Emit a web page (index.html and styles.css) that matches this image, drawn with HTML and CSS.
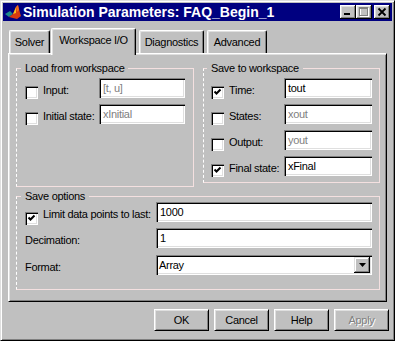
FILE: index.html
```html
<!DOCTYPE html>
<html lang="en">
<head>
  <meta charset="UTF-8">
  <title>Simulation Parameters: FAQ_Begin_1</title>
  <link rel="stylesheet" href="styles.css">
</head>
<body>
  <div class="window">
    <div class="titlebar">
      <svg class="app-icon" width="16" height="16" viewBox="0 0 16 16">
        <polygon points="0,10 5,7 8,10 4,13" fill="#1f8a8a"/>
        <polygon points="4,13 8,10 11,3 13,1 15,9 16,12 12,15 8,14" fill="#d83a10"/>
        <polygon points="8,10 11,3 11,9" fill="#f8c020"/>
        <polygon points="11,3 13,1 14,6 12,8" fill="#f07020"/>
      </svg>
      <span class="title">Simulation Parameters: FAQ_Begin_1</span>
      <div class="caption-btns">
        <span class="cap-btn">
          <svg width="16" height="14" viewBox="0 0 16 14"><rect x="4" y="8" width="6" height="2" fill="#000"/></svg>
        </span>
        <span class="cap-btn">
          <svg width="16" height="14" viewBox="0 0 16 14">
            <rect x="4.5" y="3.5" width="8" height="8" fill="none" stroke="#fff"/>
            <rect x="3.5" y="2.5" width="8" height="8" fill="none" stroke="#808080"/>
            <rect x="3" y="2" width="9" height="2" fill="#808080"/>
          </svg>
        </span>
        <span class="cap-btn close">
          <svg width="16" height="14" viewBox="0 0 16 14"><path d="M4.5 3.5 L11.5 10.5 M11.5 3.5 L4.5 10.5" stroke="#000" stroke-width="1.8"/></svg>
        </span>
      </div>
    </div>

    <div class="client">
      <div class="tabs">
        <div class="tab tab-solver">Solver</div>
        <div class="tab tab-ws active">Workspace I/O</div>
        <div class="tab tab-diag">Diagnostics</div>
        <div class="tab tab-adv">Advanced</div>
      </div>

      <div class="panel">
        <div class="group-row">
          <fieldset class="group load">
            <legend>Load from workspace</legend>
            <div class="row">
              <span class="check"></span>
              <label>Input:</label>
              <span class="field disabled">[t, u]</span>
            </div>
            <div class="row">
              <span class="check"></span>
              <label>Initial state:</label>
              <span class="field disabled">xInitial</span>
            </div>
          </fieldset>

          <fieldset class="group store">
            <legend>Save to workspace</legend>
            <div class="row">
              <span class="check checked"><svg width="13" height="13" viewBox="0 0 13 13"><polyline points="3.5,5.5 5.5,7.5 9.5,3.5" fill="none" stroke="#000" stroke-width="2"/></svg></span>
              <label>Time:</label>
              <span class="field">tout</span>
            </div>
            <div class="row">
              <span class="check"></span>
              <label>States:</label>
              <span class="field disabled">xout</span>
            </div>
            <div class="row">
              <span class="check"></span>
              <label>Output:</label>
              <span class="field disabled">yout</span>
            </div>
            <div class="row">
              <span class="check checked"><svg width="13" height="13" viewBox="0 0 13 13"><polyline points="3.5,5.5 5.5,7.5 9.5,3.5" fill="none" stroke="#000" stroke-width="2"/></svg></span>
              <label>Final state:</label>
              <span class="field">xFinal</span>
            </div>
          </fieldset>
        </div>

        <fieldset class="group options">
          <legend>Save options</legend>
          <div class="row row-limit">
            <span class="check checked"><svg width="13" height="13" viewBox="0 0 13 13"><polyline points="3.5,5.5 5.5,7.5 9.5,3.5" fill="none" stroke="#000" stroke-width="2"/></svg></span>
            <label>Limit data points to last:</label>
            <span class="field">1000</span>
          </div>
          <div class="row row-dec">
            <label class="plain">Decimation:</label>
            <span class="field">1</span>
          </div>
          <div class="row">
            <label class="plain">Format:</label>
            <div class="select">
              <span class="select-text">Array</span>
              <span class="arrow"><svg width="7" height="4" viewBox="0 0 7 4"><polygon points="0,0 7,0 3.5,4" fill="#000"/></svg></span>
            </div>
          </div>
        </fieldset>
      </div>
    </div>

    <div class="buttons">
      <span class="btn">OK</span>
      <span class="btn">Cancel</span>
      <span class="btn">Help</span>
      <span class="btn disabled">Apply</span>
    </div>
  </div>
</body>
</html>
```

FILE: styles.css
```css
* { box-sizing: border-box; }
body { margin: 0; background: #c0c0c0; font-family: "Liberation Sans", Arial, sans-serif; font-size: 11px; letter-spacing: -0.3px; color: #000; }

.window { width: 395px; height: 341px; padding: 2px; border: 1px solid; border-color: #dfdfdf #000 #000 #dfdfdf; box-shadow: inset 1px 1px #fff, inset -1px -1px #808080; background: #c0c0c0; display: flex; flex-direction: column; }

/* title bar */
.titlebar { height: 18px; flex: none; background: #000080; color: #fff; display: flex; align-items: center; padding: 0 2px; }
.app-icon { flex: none; margin-right: 2px; }
.title { flex: 1; font-weight: bold; font-size: 14px; letter-spacing: 0; line-height: 18px; white-space: nowrap; }
.caption-btns { display: flex; }
.cap-btn { display: block; width: 16px; height: 14px; background: #c0c0c0; box-shadow: inset -1px -1px #000, inset 1px 1px #fff, inset -2px -2px #808080, inset 2px 2px #dfdfdf; }
.cap-btn svg { display: block; }
.cap-btn.close { margin-left: 2px; }

/* tabs */
.client { padding: 7px 5px 0; }
.tabs { display: flex; align-items: flex-start; height: 25px; padding-left: 1px; }
.tab { height: 23px; margin-top: 2px; border: 1px solid; border-bottom: 0; border-color: #fff #000 #000 #fff; border-radius: 2px 2px 0 0; box-shadow: inset -1px 0 #808080, inset 1px 1px #dfdfdf; text-align: center; padding-top: 5px; line-height: 13px; white-space: nowrap; }
.tab-solver { width: 41px; }
.tab-ws { width: 85px; margin-left: 1px; }
.tab-diag { width: 65px; margin-left: 3px; }
.tab-adv { width: 60px; margin-left: 3px; }
.tab.active { position: relative; z-index: 1; height: 27px; margin-top: 0; background: #c0c0c0; }

.panel { height: 249px; border: 1px solid; border-color: #fff #000 #000 #fff; box-shadow: inset 1px 1px #dfdfdf, inset -1px -1px #808080; padding: 9px 0 0 7px; }

/* group boxes */
.group-row { display: flex; align-items: flex-start; gap: 9px; }
.group { margin: 0; min-width: 0; border: 1px solid #f4e0e0; border-left: 1px dashed #fff; padding: 4px 8px 0 8px; }
.group legend { padding: 0 4px; margin-left: -4px; line-height: 11px; white-space: nowrap; }
.load { width: 178px; height: 124px; }
.store { width: 177px; height: 120px; padding-left: 7px; padding-right: 7px; }
.options { width: 364px; height: 99px; margin-top: 4px; padding: 0 7px 0 8px; }

.row { display: flex; align-items: flex-start; height: 20px; margin-bottom: 6px; }
.row-dec { margin-bottom: 7px; }
.check { flex: none; width: 13px; height: 13px; margin-top: 8px; background: #fff; box-shadow: inset 1px 1px #808080, inset 2px 2px #000, inset -1px -1px #fff, inset -2px -2px #dfdfdf; }
.check svg { display: block; }
.row-limit .check { margin-top: 10px; }
.row label { margin: 6px 0 0 5px; line-height: 13px; white-space: nowrap; }
.row label.plain { margin-left: 0; }

.field { flex: none; margin-left: auto; height: 20px; background: #fff; box-shadow: inset 1px 1px #808080, inset 2px 2px #000, inset -1px -1px #fff, inset -2px -2px #dfdfdf; padding: 0 4px; line-height: 20px; white-space: nowrap; }
.field.disabled { color: #808080; }
.load .field { width: 86px; }
.store .field { width: 88px; }
.options .field { width: 216px; }

.select { flex: none; margin-left: auto; width: 216px; height: 20px; display: flex; background: #fff; padding: 2px; box-shadow: inset 1px 1px #808080, inset 2px 2px #000, inset -1px -1px #fff, inset -2px -2px #dfdfdf; }
.select-text { flex: 1; padding-left: 1px; line-height: 16px; }
.arrow { width: 16px; height: 16px; background: #c0c0c0; display: flex; align-items: center; justify-content: center; box-shadow: inset -1px -1px #000, inset 1px 1px #dfdfdf, inset -2px -2px #808080, inset 2px 2px #fff; }

/* dialog buttons */
.buttons { display: flex; justify-content: flex-end; gap: 5px; padding: 7px 3px 0 0; }
.btn { width: 55px; height: 22px; line-height: 20px; text-align: center; border: 1px solid; border-color: #fff #000 #000 #fff; box-shadow: inset 1px 1px #dfdfdf, inset -1px -1px #808080; }
.btn.disabled { color: #808080; text-shadow: 1px 1px #fff; }
```
